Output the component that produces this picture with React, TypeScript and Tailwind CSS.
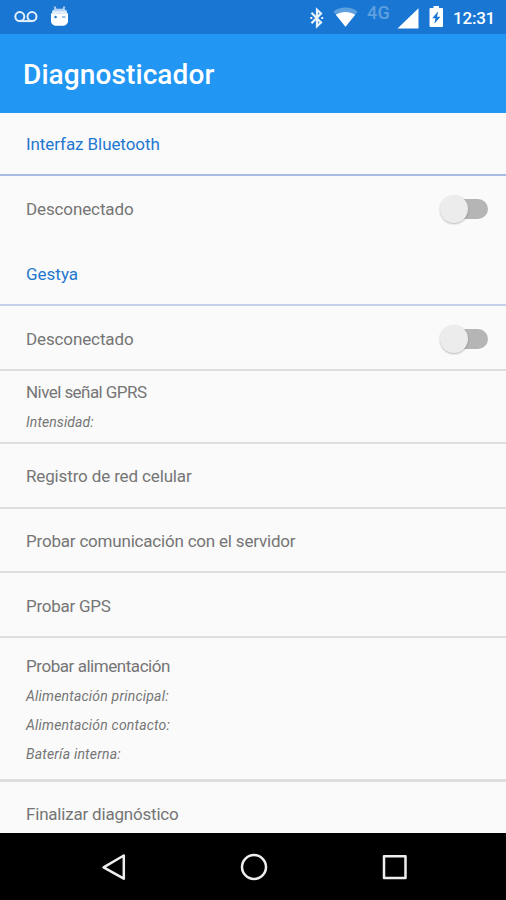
import type { ReactNode } from 'react';

const SUPPLY_DETAILS = ['Alimentación principal:', 'Alimentación contacto:', 'Batería interna:'];

function StatusBar() {
  return (
    <div className="flex h-[34px] shrink-0 items-start justify-between bg-[#1976d2] pr-[11px] pl-[14px]">
      {/* Notifications */}
      <div className="flex">
        <svg className="mt-[11px] h-[12px] w-[24px]" viewBox="0 0 24 12" fill="none" stroke="#e3effb" strokeWidth="2">
          <circle cx="5.8" cy="5.6" r="4.5" />
          <circle cx="18" cy="5.6" r="4.5" />
          <path d="M5.8 10.1H18" />
        </svg>
        <svg className="mt-[5px] ml-[12px] h-[22px] w-[19px]" viewBox="0 0 19 22">
          <path d="M4.6 1.5 6 5.5M14.4 1.5 13 5.5" stroke="#a9cdf1" strokeWidth="2" />
          <path d="M2.3 5.5 5 3.8h9l2.7 1.7v3H2.3z" fill="#b5d3f3" />
          <path d="M1 8.3h17v7.5c0 3.4-2.6 5-5.3 5H6.3C3.6 20.8 1 19.2 1 15.8z" fill="#fff" />
          <path d="M2.2 7.2h14.6" stroke="#e6f1fc" strokeWidth="1.8" />
          <circle cx="5.6" cy="12" r="1.2" fill="#1976d2" />
          <path d="M12 12h3.5" stroke="#5b9bdd" strokeWidth="1.2" />
        </svg>
      </div>

      {/* System icons */}
      <div className="flex">
        <svg className="mt-[7px] h-[22px] w-[15px]" viewBox="0 0 15 22" fill="none" stroke="#eaf3fc" strokeWidth="2.2">
          <path d="M2.5 5.8 12 15.5 8 19.2V2.8L12 6.5 2.5 16.2" />
          <path d="M1.3 11h2M12.2 11h2" />
        </svg>
        <svg className="mt-[7px] ml-[9px] h-[20px] w-[25px]" viewBox="0 0 25 20">
          <path d="M.3 4.5C7-.7 18-.7 24.7 4.5L12.5 19.8z" fill="#5e9fe0" />
          <path d="M2.8 7.7C9 4 16 4 22.2 7.7L12.5 19.8z" fill="#fff" />
        </svg>
        <span className="mt-[4px] ml-[9px] w-[25px] text-[18px] leading-[18px] font-medium tracking-[0.2px] text-[#5e9fe0]">4G</span>
        <svg className="mt-[8px] ml-[5px] h-[21px] w-[22px]" viewBox="0 0 22 21">
          <path d="M21.5.2V20.5H.5z" fill="#fff" />
        </svg>
        <svg className="mt-[6px] ml-[10px] h-[22px] w-[15px]" viewBox="0 0 15 22">
          <path d="M4.5 0h5.5v2H13a1 1 0 0 1 1 1v17a1 1 0 0 1-1 1H1.5a1 1 0 0 1-1-1V3a1 1 0 0 1 1-1h3z" fill="#fff" />
          <path d="M9.2 5.2 3.2 12.2h3.2L5.4 17.8 11.4 10.7H8z" fill="#1976d2" />
        </svg>
        <span className="mt-[8px] ml-[9px] text-[17px] leading-[20px] font-medium tracking-[-0.25px] text-white">12:31</span>
      </div>
    </div>
  );
}

function Toggle() {
  return (
    <div className="flex h-[28px] w-[48px] items-center">
      <div className="z-10 h-[28px] w-[28px] shrink-0 rounded-full bg-[#ececec] shadow-[0_1px_2px_rgba(0,0,0,0.25)]" />
      <div className="-ml-[14px] h-[20px] w-[34px] rounded-r-full bg-[#b5b5b5]" />
    </div>
  );
}

function SectionTitle({ children, className }: { children: ReactNode; className: string }) {
  return (
    <h2 className={`flex shrink-0 items-center border-b-2 px-[26px] text-[#1f78d0] ${className}`}>
      {children}
    </h2>
  );
}

function Row({ children, className }: { children: ReactNode; className: string }) {
  return (
    <div className={`flex shrink-0 items-center justify-between border-[#dedede] pr-[18px] pl-[26px] ${className}`}>
      {children}
    </div>
  );
}

function NavigationBar() {
  return (
    <div className="flex h-[67px] shrink-0 items-start bg-black pt-[20px] pl-[101px]">
      <svg className="h-[28px] w-[26px]" viewBox="0 0 26 28" fill="none" stroke="#eee" strokeWidth="2.5" strokeLinejoin="round">
        <path d="M22.8 2.5v23.2L2.6 14.3z" />
      </svg>
      <svg className="ml-[113px] h-[28px] w-[28px]" viewBox="0 0 28 28" fill="none" stroke="#eee" strokeWidth="2.5">
        <circle cx="14" cy="14" r="12" />
      </svg>
      <svg className="ml-[113px] h-[28px] w-[28px]" viewBox="0 0 28 28" fill="none" stroke="#eee" strokeWidth="2.5" strokeLinejoin="round">
        <rect x="3" y="3.3" width="21.5" height="21.7" />
      </svg>
    </div>
  );
}

export default function App() {
  return (
    <div className="flex h-[900px] w-[506px] flex-col overflow-hidden bg-[#fafafa] font-[Roboto,sans-serif] text-[17px] leading-[20px] text-[#757575]">
      <StatusBar />
      <header className="flex h-[79px] shrink-0 items-center bg-[#2196f3] pt-[3px] pl-[23px]">
        <h1 className="text-[28px] leading-[32px] font-medium tracking-[0.1px] text-white">Diagnosticador</h1>
      </header>

      <main className="flex h-[720px] shrink-0 flex-col overflow-hidden">
        <SectionTitle className="h-[63px] border-[#a9bbe0] tracking-[-0.08px]">Interfaz Bluetooth</SectionTitle>
        <Row className="h-[67px] pb-[1px] tracking-[-0.12px]">
          <span>Desconectado</span>
          <Toggle />
        </Row>
        <SectionTitle className="h-[63px] border-[#c5cfea]">Gestya</SectionTitle>
        <Row className="h-[65px] border-b-2 pt-[2px] tracking-[-0.12px]">
          <span>Desconectado</span>
          <Toggle />
        </Row>

        <Row className="h-[73px] border-b-2">
          <div>
            <p className="tracking-[-0.56px]">Nivel señal GPRS</p>
            <p className="mt-[10px] text-[14px] tracking-[0.1px] italic">Intensidad:</p>
          </div>
        </Row>
        <Row className="h-[65px] border-b-2 tracking-[-0.14px]">Registro de red celular</Row>
        <Row className="h-[64px] border-b-2 pt-[2px] tracking-[-0.2px]">Probar comunicación con el servidor</Row>
        <Row className="h-[65px] border-b-2 pt-[2px] tracking-[-0.25px]">Probar GPS</Row>
        <Row className="h-[144px] border-b-[3px] pt-[3px]">
          <div>
            <p className="mb-[10px] tracking-[-0.45px]">Probar alimentación</p>
            <div className="space-y-[9px] text-[14px] tracking-[0.2px] italic">
              {SUPPLY_DETAILS.map((detail) => (
                <p key={detail}>{detail}</p>
              ))}
            </div>
          </div>
        </Row>
        <Row className="h-[64px] tracking-[-0.2px]">Finalizar diagnóstico</Row>
      </main>
      <NavigationBar />
    </div>
  );
}
